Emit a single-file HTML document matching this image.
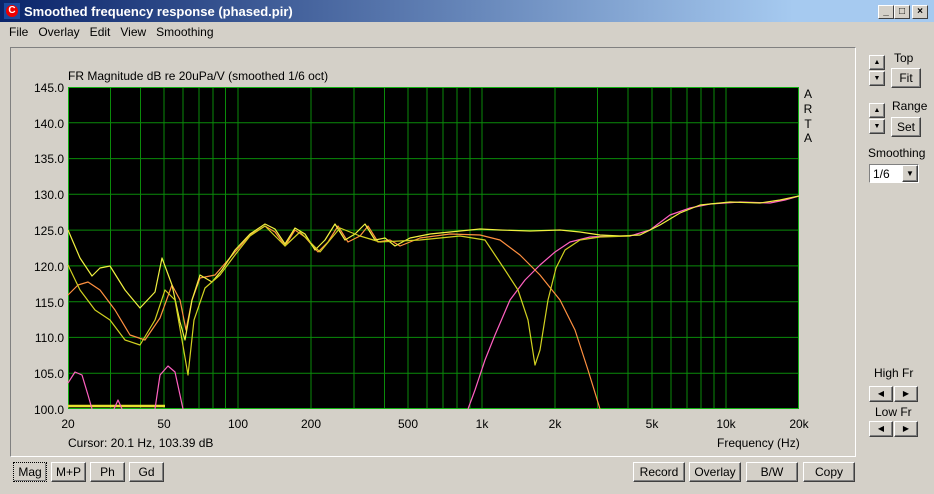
<!DOCTYPE html><html><head><style>
body{margin:0;width:934px;height:494px;background:#d4d0c8;font-family:"Liberation Sans",sans-serif;font-size:12px;position:relative;overflow:hidden}
.a{position:absolute}
.title{left:0;top:0;width:934px;height:22px;background:linear-gradient(90deg,#0a246a,#a6caf0 85%);color:#fff;font-weight:bold;font-size:13px}
.wb{width:14px;height:12px;background:#d4d0c8;border:1px solid;border-color:#fff #404040 #404040 #fff;top:5px;font-size:10px;color:#000;text-align:center;line-height:12px;font-weight:bold}
.btn{background:#d4d0c8;border:1px solid;border-color:#fff #404040 #404040 #fff;box-shadow:inset -1px -1px #808080;text-align:center;font-size:12px;color:#000;box-sizing:border-box}
.lbl{font-size:12px;color:#000}
</style></head><body>
<div class="a title"><div class="a" style="left:4px;top:3px;width:16px;height:16px;background:#1a4aa0"><div class="a" style="left:2px;top:2px;width:12px;height:12px;border-radius:50%;background:#e00;color:#fff;font-size:10px;line-height:12px;text-align:center">C</div></div><span class="a" style="left:24px;top:4px">Smoothed frequency response (phased.pir)</span>
<div class="a wb" style="left:878px">_</div><div class="a wb" style="left:894px">□</div><div class="a wb" style="left:912px">×</div></div>
<div class="a" style="left:9px;top:25px">File &nbsp;&nbsp;Overlay &nbsp;&nbsp;Edit &nbsp;&nbsp;View &nbsp;&nbsp;Smoothing</div>
<div class="a" style="left:10px;top:47px;width:844px;height:408px;border:1px solid;border-color:#808080 #fff #fff #808080"></div>
<svg class="a" style="left:0;top:0" width="934" height="494" font-family="Liberation Sans" font-size="12">
<text x="68" y="80">FR Magnitude dB re 20uPa/V (smoothed 1/6 oct)</text>
<rect x="68" y="87" width="731" height="322" fill="#000"/>
<g stroke="#0a8a0a" stroke-width="1">
<path d="M68 122.8H799M68 158.6H799M68 194.3H799M68 230.1H799M68 265.9H799M68 301.7H799M68 337.4H799M68 373.2H799"/>
<path d="M110.5 87V409M140.5 87V409M164 87V409M183 87V409M199 87V409M213 87V409M225.5 87V409M238 87V409M311 87V409M354 87V409M384.5 87V409M408 87V409M427 87V409M443 87V409M457 87V409M470 87V409M482 87V409M555 87V409M597.5 87V409M628 87V409M652 87V409M671 87V409M687 87V409M701 87V409M714 87V409M726 87V409"/>
</g>
<rect x="68.5" y="87.5" width="730" height="321" fill="none" stroke="#10b010"/>
<g text-anchor="end"><text x="64" y="92">145.0</text><text x="64" y="128">140.0</text><text x="64" y="163">135.0</text><text x="64" y="199">130.0</text><text x="64" y="235">125.0</text><text x="64" y="271">120.0</text><text x="64" y="307">115.0</text><text x="64" y="342">110.0</text><text x="64" y="378">105.0</text><text x="64" y="414">100.0</text></g>
<g text-anchor="middle"><text x="68" y="428">20</text><text x="164" y="428">50</text><text x="238" y="428">100</text><text x="311" y="428">200</text><text x="408" y="428">500</text><text x="482" y="428">1k</text><text x="555" y="428">2k</text><text x="652" y="428">5k</text><text x="726" y="428">10k</text><text x="799" y="428">20k</text>
<text x="808" y="98">A</text><text x="808" y="113">R</text><text x="808" y="128">T</text><text x="808" y="142">A</text></g>
<text x="68" y="447">Cursor: 20.1 Hz, 103.39 dB</text><text x="717" y="447">Frequency (Hz)</text>
<g fill="none" stroke-width="1.2" stroke-linejoin="round">
<path stroke="#e8e030" stroke-width="2.5" d="M68 406H165"/>
<path stroke="#ff60c0" d="M68 383L75 372L82 375L88 395L92 409M114 409L118 400L122 409M155 409L160 375L168 366L175 372L180 395L183 409M468 409L475 390L485 360L495 335L510 300L525 280L540 265L555 252L570 242L590 237L610 236L630 236L650 230L670 215L690 208L710 204L740 202L770 203L785 200L799 196"/>
<path stroke="#ff9040" d="M68 295L78 285L88 282L100 290L115 310L130 335L145 340L160 318L172 285L180 300L186 330L192 300L200 278L215 275L235 252L250 235L265 226L275 232L285 246L295 230L305 237L318 252L328 242L338 226L348 242L360 236L368 226L378 242L390 240L400 246L420 238L450 234L480 235L500 240L520 255L540 275L560 300L575 330L588 370L600 409"/>
<path stroke="#f0f040" d="M68 230L80 258L92 276L100 268L110 266L125 290L140 308L155 292L162 258L172 285L180 322L185 340L192 300L200 275L212 282L222 270L235 250L250 234L265 224L275 229L285 244L295 228L305 234L315 250L325 240L335 224L345 240L355 234L365 224L375 240L385 238L395 246L410 238L430 234L460 231L480 229L500 230L530 231L560 230L580 232L600 235L620 236L640 235L660 225L680 213L700 205L730 202L760 203L780 200L799 196"/>
<path stroke="#d0d020" d="M68 265L80 290L95 310L110 320L125 340L140 345L155 320L165 290L175 300L182 340L188 375L194 320L205 288L220 275L235 255L250 236L265 226L285 246L300 232L320 252L340 228L360 236L380 242L420 240L460 236L485 240L495 255L505 270L518 290L528 320L535 365L540 350L548 300L556 268L565 250L580 240L600 237L630 236"/>
</g>
</svg>
<div class="a lbl" style="left:894px;top:51px">Top</div>
<div class="a btn" style="left:869px;top:55px;width:16px;height:15px;font-size:7px;line-height:13px">▲</div>
<div class="a btn" style="left:869px;top:71px;width:16px;height:15px;font-size:7px;line-height:13px">▼</div>
<div class="a btn" style="left:891px;top:68px;width:30px;height:20px;line-height:18px">Fit</div>
<div class="a lbl" style="left:892px;top:99px">Range</div>
<div class="a btn" style="left:869px;top:103px;width:16px;height:15px;font-size:7px;line-height:13px">▲</div>
<div class="a btn" style="left:869px;top:119px;width:16px;height:15px;font-size:7px;line-height:13px">▼</div>
<div class="a btn" style="left:891px;top:117px;width:30px;height:20px;line-height:18px">Set</div>
<div class="a lbl" style="left:868px;top:146px">Smoothing</div>
<div class="a" style="left:869px;top:164px;width:50px;height:19px;background:#fff;border:1px solid;border-color:#808080 #fff #fff #808080;box-sizing:border-box"><span class="a" style="left:3px;top:2px">1/6</span><div class="a btn" style="right:0;top:0;width:16px;height:17px;font-size:8px;line-height:15px">▼</div></div>
<div class="a lbl" style="left:874px;top:366px">High Fr</div>
<div class="a btn" style="left:869px;top:386px;width:24px;height:16px;font-size:8px;line-height:14px">◀</div>
<div class="a btn" style="left:894px;top:386px;width:24px;height:16px;font-size:8px;line-height:14px">▶</div>
<div class="a lbl" style="left:875px;top:405px">Low Fr</div>
<div class="a btn" style="left:869px;top:421px;width:24px;height:16px;font-size:8px;line-height:14px">◀</div>
<div class="a btn" style="left:894px;top:421px;width:24px;height:16px;font-size:8px;line-height:14px">▶</div>
<div class="a btn" style="left:13px;top:462px;width:34px;height:20px;line-height:18px;border:1px dotted #000">Mag</div>
<div class="a btn" style="left:51px;top:462px;width:35px;height:20px;line-height:18px">M+P</div>
<div class="a btn" style="left:90px;top:462px;width:35px;height:20px;line-height:18px">Ph</div>
<div class="a btn" style="left:129px;top:462px;width:35px;height:20px;line-height:18px">Gd</div>
<div class="a btn" style="left:633px;top:462px;width:52px;height:20px;line-height:18px">Record</div>
<div class="a btn" style="left:689px;top:462px;width:52px;height:20px;line-height:18px">Overlay</div>
<div class="a btn" style="left:746px;top:462px;width:52px;height:20px;line-height:18px">B/W</div>
<div class="a btn" style="left:803px;top:462px;width:52px;height:20px;line-height:18px">Copy</div>
</body></html>
